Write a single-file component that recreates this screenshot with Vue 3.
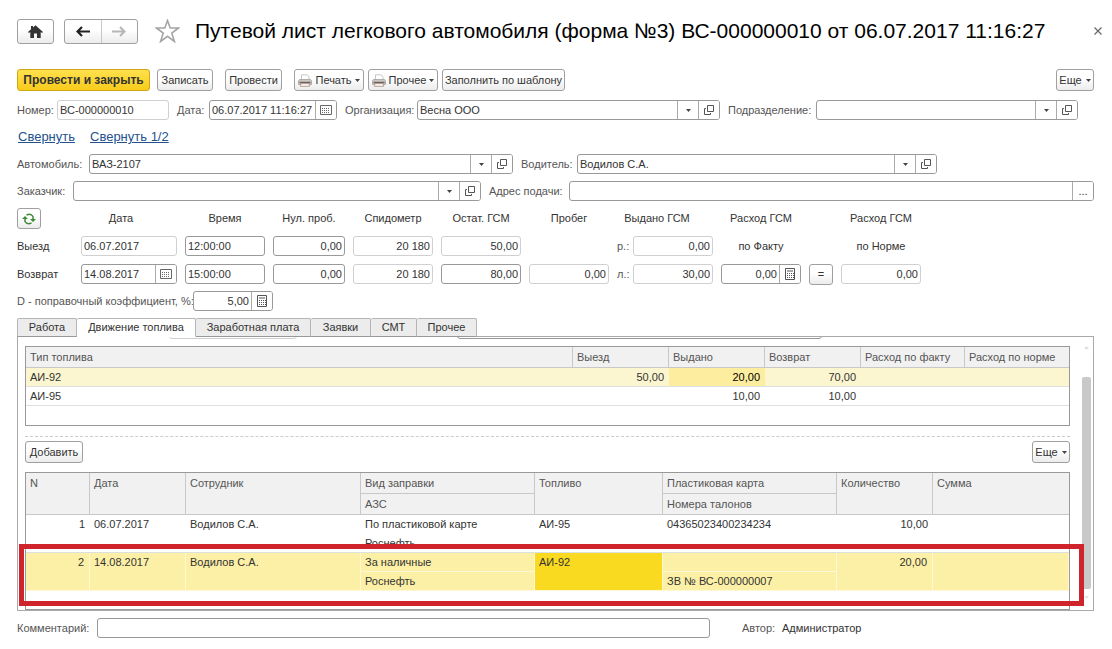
<script setup>
import { ref } from 'vue'

const tabs = [
  { name: 'Работа', cls: 'w60' },
  { name: 'Движение топлива', cls: 'w119' },
  { name: 'Заработная плата', cls: 'w115' },
  { name: 'Заявки', cls: 'w60' },
  { name: 'СМТ', cls: 'w46' },
  { name: 'Прочее', cls: 'w60' },
]
const activeTab = ref('Движение топлива')

const fuel = [
  { type: 'АИ-92', out: '50,00', issued: '20,00', back: '70,00', current: true },
  { type: 'АИ-95', out: '', issued: '10,00', back: '10,00', current: false },
]

const refuels = [
  { n: 1, date: '06.07.2017', person: 'Водилов С.А.', kind: 'По пластиковой карте', station: 'Роснефть', fuel: 'АИ-95', card: '04365023400234234', coupons: '', qty: '10,00', current: false },
  { n: 2, date: '14.08.2017', person: 'Водилов С.А.', kind: 'За наличные', station: 'Роснефть', fuel: 'АИ-92', card: '', coupons: 'ЗВ № ВС-000000007', qty: '20,00', current: true },
]
</script>

<template>
  <div class="window">
    <svg class="defs" aria-hidden="true">
      <symbol id="i-open" viewBox="0 0 10 10"><path d="M3.5 .5h6v6h-6zM2 3.500H.5v6h6V8" fill="none" stroke="#555" /></symbol>
      <symbol id="i-cal" viewBox="0 0 12 10"><path d="M.5 .5h11v9H.5z" fill="none" stroke="#666" /><path d="M2 3.5h8M2 5.5h8M2 7.5h8" stroke="#666" stroke-dasharray="1 1" /></symbol>
      <symbol id="i-calc" viewBox="0 0 10 12"><path d="M.5 .5h9v11h-9zM2 3h6" fill="none" stroke="#555" /><path d="M2 5.5h7M2 7.5h7M2 9.5h7" stroke="#555" stroke-dasharray="1 1" /></symbol>
      <symbol id="i-down" viewBox="0 0 5 3"><path d="M0 0h5L2.500 3z" fill="#444" /></symbol>
      <symbol id="i-print" viewBox="0 0 14 13">
        <path d="M3.500 6V.8h5.500l2 1.700V6" fill="#fff" stroke="#bbb" stroke-width=".8" />
        <path d="M1.500 5.500h11l1 1.500v3.500h-13V7z" fill="#c9c5bf" stroke="#a5a19c" stroke-width=".8" />
        <path d="M1.500 8.500h11" stroke="#6a6260" stroke-width="1.400" />
        <path d="M3 9.500h8l.6 2.900H2.400z" fill="#f7efe8" stroke="#a58a80" stroke-width=".7" />
      </symbol>
    </svg>

    <header class="head">
      <button class="btn nav home" aria-label="Главная">
        <svg width="15" height="13" viewBox="0 0 15 13"><path d="M7.500 .3 15 7l-1 1-1.300-1.100V13H9V8.500H6V13H2.300V6.900L1 8 0 7 3 4.300V1h2v1.500z" fill="#333" /></svg>
      </button>
      <div class="pair">
        <button class="nav" aria-label="Назад"><svg width="14" height="11" viewBox="0 0 14 11"><path d="M14 5.500H2M6 1 1.500 5.500 6 10" fill="none" stroke="#222" stroke-width="2.200" /></svg></button>
        <button class="nav" aria-label="Вперед"><svg width="14" height="11" viewBox="0 0 14 11"><path d="M0 5.500h12M8 1l4.500 4.500L8 10" fill="none" stroke="#b5b5b5" stroke-width="2" /></svg></button>
      </div>
      <button class="bare star" aria-label="В избранное">
        <svg width="25" height="24" viewBox="0 0 25 24"><path d="M12.500 1.500 15.200 9h8.300l-6.700 5 2.600 8.500-6.900-5.200-6.900 5.200L8.200 14 1.500 9h8.300z" fill="#fff" stroke="#a5a5a5" stroke-width="1.600" /></svg>
      </button>
      <h1>Путевой лист легкового автомобиля (форма №3) ВС-000000010 от 06.07.2017 11:16:27</h1>
      <button class="bare close" aria-label="Закрыть"><svg width="8" height="8" viewBox="0 0 8 8"><path d="M.5 .5l7 7M7.500 .5l-7 7" stroke="#666" stroke-width="1.200" /></svg></button>
    </header>

    <div class="toolbar">
      <button class="btn primary">Провести и закрыть</button>
      <button class="btn save">Записать</button>
      <button class="btn post">Провести</button>
      <div class="group">
        <button class="btn menu"><svg width="14" height="13"><use href="#i-print" /></svg>Печать<svg width="5" height="3"><use href="#i-down" /></svg></button>
        <button class="btn menu"><svg width="14" height="13"><use href="#i-print" /></svg>Прочее<svg width="5" height="3"><use href="#i-down" /></svg></button>
        <button class="btn fill">Заполнить по шаблону</button>
      </div>
      <button class="btn more">Еще<svg width="5" height="3"><use href="#i-down" /></svg></button>
    </div>

    <div class="row doc">
      <label for="num">Номер:</label>
      <div class="field ro"><input id="num" value="ВС-000000010" readonly></div>
      <label class="next" for="date">Дата:</label>
      <div class="field"><input id="date" value="06.07.2017 11:16:27"><button aria-label="Календарь"><svg width="12" height="10"><use href="#i-cal" /></svg></button></div>
      <label class="next" for="org">Организация:</label>
      <div class="field"><input id="org" value="Весна ООО"><button aria-label="Выбрать"><svg width="5" height="3"><use href="#i-down" /></svg></button><button aria-label="Открыть"><svg width="10" height="10"><use href="#i-open" /></svg></button></div>
      <label class="next" for="dep">Подразделение:</label>
      <div class="field"><input id="dep" value=""><button aria-label="Выбрать"><svg width="5" height="3"><use href="#i-down" /></svg></button><button aria-label="Открыть"><svg width="10" height="10"><use href="#i-open" /></svg></button></div>
    </div>

    <div class="links"><a href="#all">Свернуть</a><a href="#half">Свернуть 1/2</a></div>

    <div class="row car">
      <label for="car">Автомобиль:</label>
      <div class="field"><input id="car" value="ВАЗ-2107"><button aria-label="Выбрать"><svg width="5" height="3"><use href="#i-down" /></svg></button><button aria-label="Открыть"><svg width="10" height="10"><use href="#i-open" /></svg></button></div>
      <label class="next" for="driver">Водитель:</label>
      <div class="field"><input id="driver" value="Водилов С.А."><button aria-label="Выбрать"><svg width="5" height="3"><use href="#i-down" /></svg></button><button aria-label="Открыть"><svg width="10" height="10"><use href="#i-open" /></svg></button></div>
    </div>

    <div class="row client">
      <label for="client">Заказчик:</label>
      <div class="field"><input id="client" value=""><button aria-label="Выбрать"><svg width="5" height="3"><use href="#i-down" /></svg></button><button aria-label="Открыть"><svg width="10" height="10"><use href="#i-open" /></svg></button></div>
      <label class="next" for="addr">Адрес подачи:</label>
      <div class="field"><input id="addr" value=""><button aria-label="Выбрать адрес">...</button></div>
    </div>

    <div class="meters">
      <button class="btn square" aria-label="Обновить">
        <svg width="14" height="12" viewBox="0 0 14 12"><path d="M4.500 2Q9 0 11 3.500V7M9.500 10Q5 12 3 8.500V5" fill="none" stroke="#3d8b37" stroke-width="1.500" /><path d="M8 6h6l-3 3zM0 6h6L3 3z" fill="#3d8b37" /></svg>
      </button>
      <span class="cap shift">Дата</span><span class="cap">Время</span><span class="cap">Нул. проб.</span><span class="cap">Спидометр</span><span class="cap">Остат. ГСМ</span><span class="cap">Пробег</span><span class="cap shift">Выдано ГСМ</span><span class="cap">Расход ГСМ</span><span></span><span class="cap">Расход ГСМ</span>

      <span>Выезд</span>
      <div class="field ro"><input aria-label="Дата выезда" value="06.07.2017" readonly></div>
      <div class="field"><input aria-label="Время выезда" value="12:00:00"></div>
      <div class="field num"><input aria-label="Нулевой пробег, выезд" value="0,00"></div>
      <div class="field num ro"><input aria-label="Спидометр, выезд" value="20 180" readonly></div>
      <div class="field num ro"><input aria-label="Остаток ГСМ, выезд" value="50,00" readonly></div>
      <span></span>
      <div class="unit"><label for="rub">р.:</label><div class="field num ro"><input id="rub" value="0,00" readonly></div></div>
      <span class="cap">по Факту</span><span></span><span class="cap">по Норме</span>

      <span>Возврат</span>
      <div class="field"><input aria-label="Дата возврата" value="14.08.2017"><button aria-label="Календарь"><svg width="12" height="10"><use href="#i-cal" /></svg></button></div>
      <div class="field"><input aria-label="Время возврата" value="15:00:00"></div>
      <div class="field num"><input aria-label="Нулевой пробег, возврат" value="0,00"></div>
      <div class="field num ro"><input aria-label="Спидометр, возврат" value="20 180" readonly></div>
      <div class="field num"><input aria-label="Остаток ГСМ, возврат" value="80,00"></div>
      <div class="field num ro"><input aria-label="Пробег" value="0,00" readonly></div>
      <div class="unit"><label for="lit">л.:</label><div class="field num ro"><input id="lit" value="30,00" readonly></div></div>
      <div class="field num"><input aria-label="Расход по факту" value="0,00"><button aria-label="Калькулятор"><svg width="10" height="12"><use href="#i-calc" /></svg></button></div>
      <button class="btn square">=</button>
      <div class="field num ro"><input aria-label="Расход по норме" value="0,00" readonly></div>
    </div>

    <div class="row coef">
      <label for="coef">D - поправочный коэффициент, %:</label>
      <div class="field num"><input id="coef" value="5,00"><button aria-label="Калькулятор"><svg width="10" height="12"><use href="#i-calc" /></svg></button></div>
    </div>

    <div class="tabs" role="tablist">
      <button v-for="t in tabs" :key="t.name" role="tab" :aria-selected="t.name === activeTab" :class="['tab', t.cls, { on: t.name === activeTab }]" @click="activeTab = t.name">{{ t.name }}</button>
    </div>

    <section class="panel">
      <div class="content">
        <div class="scrolled"><i class="edge light"></i><i class="edge"></i></div>

        <div class="frame fuel">
          <table>
            <colgroup><col><col class="c96"><col class="c96"><col class="c96"><col class="c104"><col class="c104"></colgroup>
            <thead><tr><th>Тип топлива</th><th>Выезд</th><th>Выдано</th><th>Возврат</th><th>Расход по факту</th><th>Расход по норме</th></tr></thead>
            <tbody>
              <tr v-for="f in fuel" :key="f.type" :class="{ current: f.current }">
                <td>{{ f.type }}</td><td class="r">{{ f.out }}</td><td class="r pick">{{ f.issued }}</td><td class="r">{{ f.back }}</td><td></td><td></td>
              </tr>
            </tbody>
          </table>
        </div>

        <div class="actions">
          <button class="btn add">Добавить</button>
          <button class="btn more">Еще<svg width="5" height="3"><use href="#i-down" /></svg></button>
        </div>

        <div class="refuel">
          <div class="frame list">
            <table>
              <colgroup><col class="c64"><col class="c96"><col class="c175"><col class="c174"><col class="c128"><col class="c174"><col class="c96"><col></colgroup>
              <thead>
                <tr><th rowspan="2">N</th><th rowspan="2">Дата</th><th rowspan="2">Сотрудник</th><th>Вид заправки</th><th rowspan="2">Топливо</th><th>Пластиковая карта</th><th rowspan="2">Количество</th><th rowspan="2">Сумма</th></tr>
                <tr><th>АЗС</th><th>Номера талонов</th></tr>
              </thead>
              <tbody v-for="r in refuels" :key="r.n" :class="{ current: r.current }">
                <tr><td rowspan="2" class="r">{{ r.n }}</td><td rowspan="2">{{ r.date }}</td><td rowspan="2">{{ r.person }}</td><td>{{ r.kind }}</td><td rowspan="2" class="pick">{{ r.fuel }}</td><td>{{ r.card }}</td><td rowspan="2" class="r">{{ r.qty }}</td><td rowspan="2"></td></tr>
                <tr><td>{{ r.station }}</td><td>{{ r.coupons }}</td></tr>
              </tbody>
            </table>
          </div>
          <div class="marker"></div>
        </div>
      </div>
      <div class="scroll"><svg width="5" height="3" viewBox="0 0 5 3"><path d="M0 3h5L2.500 0z" fill="#ddd" /></svg><div class="thumb"></div><svg width="5" height="3" viewBox="0 0 5 3"><path d="M0 0h5L2.500 3z" fill="#e4e4e4" /></svg></div>
    </section>

    <footer class="row foot">
      <label for="comment">Комментарий:</label>
      <div class="field"><input id="comment" value=""></div>
      <span class="author">Автор:</span><span class="who">Администратор</span>
    </footer>
  </div>
</template>

<style>
body { margin: 0; background: #fff; }
</style>

<style scoped>
.window, .window * { box-sizing: border-box; }
.window { padding: 18px 18px 8px 17px; font: 11px/13px "Liberation Sans", Arial, sans-serif; color: #333; }
.defs { position: absolute; width: 0; height: 0; }
button, input { font: inherit; color: inherit; margin: 0; }
button { padding: 0; cursor: pointer; white-space: nowrap; }
svg { display: block; flex: none; }
label, .author { color: #555; white-space: nowrap; }

.btn, .pair { display: flex; align-items: center; justify-content: center; border: 1px solid #a0a0a0; border-radius: 3px; background: linear-gradient(#fff 40%, #ececec); }
.bare { border: 0; background: none; display: flex; align-items: center; justify-content: center; }

.head { display: flex; align-items: center; height: 26px; }
.home { width: 37px; height: 25px; }
.pair { width: 74px; height: 25px; margin-left: 10px; }
.pair .nav { flex: 1; height: 100%; border: 0; background: none; display: flex; align-items: center; justify-content: center; }
.pair .nav + .nav { border-left: 1px solid #c8c8c8; }
.star { margin-left: 17px; }
h1 { flex: 1; margin: 0 0 0 15px; font-size: 21px; line-height: 26px; font-weight: 400; color: #000; white-space: nowrap; }
.close { width: 8px; margin-right: -8px; }

.toolbar { display: flex; gap: 12px; margin-top: 25px; }
.toolbar .btn, .actions .btn { height: 22px; }
.toolbar .primary { width: 133px; font-size: 12px; font-weight: 700; color: #333; border-color: #d0a813; background: linear-gradient(#ffe14d, #f7cb1c); }
.toolbar .save { width: 56px; margin-left: -5px; }
.post { width: 57px; }
.group { display: flex; gap: 4px; }
.menu { width: 70px; gap: 3px; }
.fill { width: 123px; }
.more { width: 38px; gap: 4px; margin-left: auto; }

.row { display: grid; align-items: center; }
.next { padding-left: 8px; }
.doc { grid-template-columns: 40px 112px 40px 128px 80px 303fr 96px 262fr; margin: 9px 16px 0 0; }
.car { grid-template-columns: 72px 424fr 64px 360fr 157fr; margin-top: 9px; }
.client { grid-template-columns: 56px 408fr 88px 525fr; margin-top: 7px; }
.field { display: flex; height: 20px; min-width: 0; border: 1px solid #999; border-radius: 3px; background: #fff; overflow: hidden; }
.field input { flex: 1; min-width: 0; width: 0; border: 0; padding: 0 2px; background: none; outline: none; }
.field button { width: 21px; flex: none; border: 0; border-left: 1px solid #aaa; background: #fff; display: flex; align-items: center; justify-content: center; }
.ro { border-color: #d0d0d0; }
.num input { text-align: right; }

.links { display: flex; gap: 15px; margin-top: 9px; padding-left: 1px; font-size: 13px; line-height: 16px; }
.links a { color: #24528f; }

.meters { display: grid; grid-template-columns: 56px 96px 80px 72px 80px 80px 80px 96px 80px 24px 80px; column-gap: 8px; row-gap: 7px; grid-auto-rows: 21px; align-items: center; margin-top: 7px; }
.meters .field, .unit { align-self: start; }
.cap { text-align: center; white-space: nowrap; }
.shift { padding-right: 16px; }
.square { width: 24px; height: 21px; }
.unit { display: grid; grid-template-columns: 16px 80px; align-items: center; }
.coef { grid-template-columns: 176px 80px; margin-top: 6px; }

.tabs { display: flex; margin-top: 7px; }
.tab { height: 19px; border: 1px solid #b5b5b5; border-left-width: 0; border-bottom-color: #999; border-radius: 2px 2px 0 0; background: #ececec; }
.tab:first-child { border-left-width: 1px; }
.tab.on { background: #fff; border-bottom-color: #fff; }
.w60 { width: 60px; }
.w119 { width: 119px; }
.w115 { width: 115px; }
.w46 { width: 46px; }

.panel { display: flex; margin-top: -1px; border: 1px solid #aaa; }
.tabs { position: relative; z-index: 1; }
.content { flex: 1; min-width: 0; padding-left: 7px; }
.scrolled { display: flex; height: 2px; overflow: hidden; align-items: flex-end; padding-left: 144px; gap: 160px; }
.edge { flex: none; width: 128px; height: 20px; border: 1px solid #999; border-radius: 3px; }
.edge + .edge { width: 365px; }
.edge.light { border-color: #d0d0d0; }
.frame { border: 1px solid #999; overflow: hidden; }
.fuel { height: 80px; margin-top: 7px; }
table { width: 100%; border-collapse: separate; border-spacing: 0; table-layout: fixed; }
th, td { padding: 0 5px 0 4px; text-align: left; vertical-align: top; font-weight: 400; white-space: nowrap; overflow: hidden; }
th { height: 21px; line-height: 20px; background: #f1f1f1; color: #555; border-right: 1px solid #c8c8c8; border-bottom: 1px solid #c8c8c8; }
tr:first-child th:last-child { border-right: 0; }
td { height: 19px; line-height: 18px; border-bottom: 1px solid #dde0e0; }
.r { text-align: right; }
.fuel .current td { background: #fbf6cf; }
.fuel .current .pick { background: #fcee9e; color: #000; }
.c64 { width: 64px; }
.c96 { width: 96px; }
.c104 { width: 104px; }
.c128 { width: 128px; }
.c174 { width: 174px; }
.c175 { width: 175px; }

.actions { display: flex; margin-top: 10px; padding-top: 4px; border-top: 1px dashed #ccc; }
.add { width: 58px; }
.refuel { position: relative; margin-top: 9px; }
.list { height: 138px; }
.list tbody tr:first-child td:not([rowspan]) { border-bottom-color: transparent; }
.list .current td { background: #fcf0a6; border-right: 1px solid #fff8d4; border-bottom-color: #fff8d4; }
.list .current tr:first-child td:not([rowspan]) { border-bottom-color: #fff8d4; }
.list .current .pick { background: #f9da20; }
.marker { position: absolute; top: 72px; left: -6px; right: -14px; height: 62px; border: 5px solid #d0242c; pointer-events: none; z-index: 2; }
.scroll { width: 23px; display: flex; flex-direction: column; align-items: center; padding: 9px 0 11px 9px; }
.thumb { flex: 1; width: 9px; margin: 28px 0 7px; border-radius: 2px; background: #c9c9c9; }

.foot { grid-template-columns: 80px 613fr 72px 312fr; margin-top: 7px; }
.foot .author { padding-left: 32px; }
</style>
